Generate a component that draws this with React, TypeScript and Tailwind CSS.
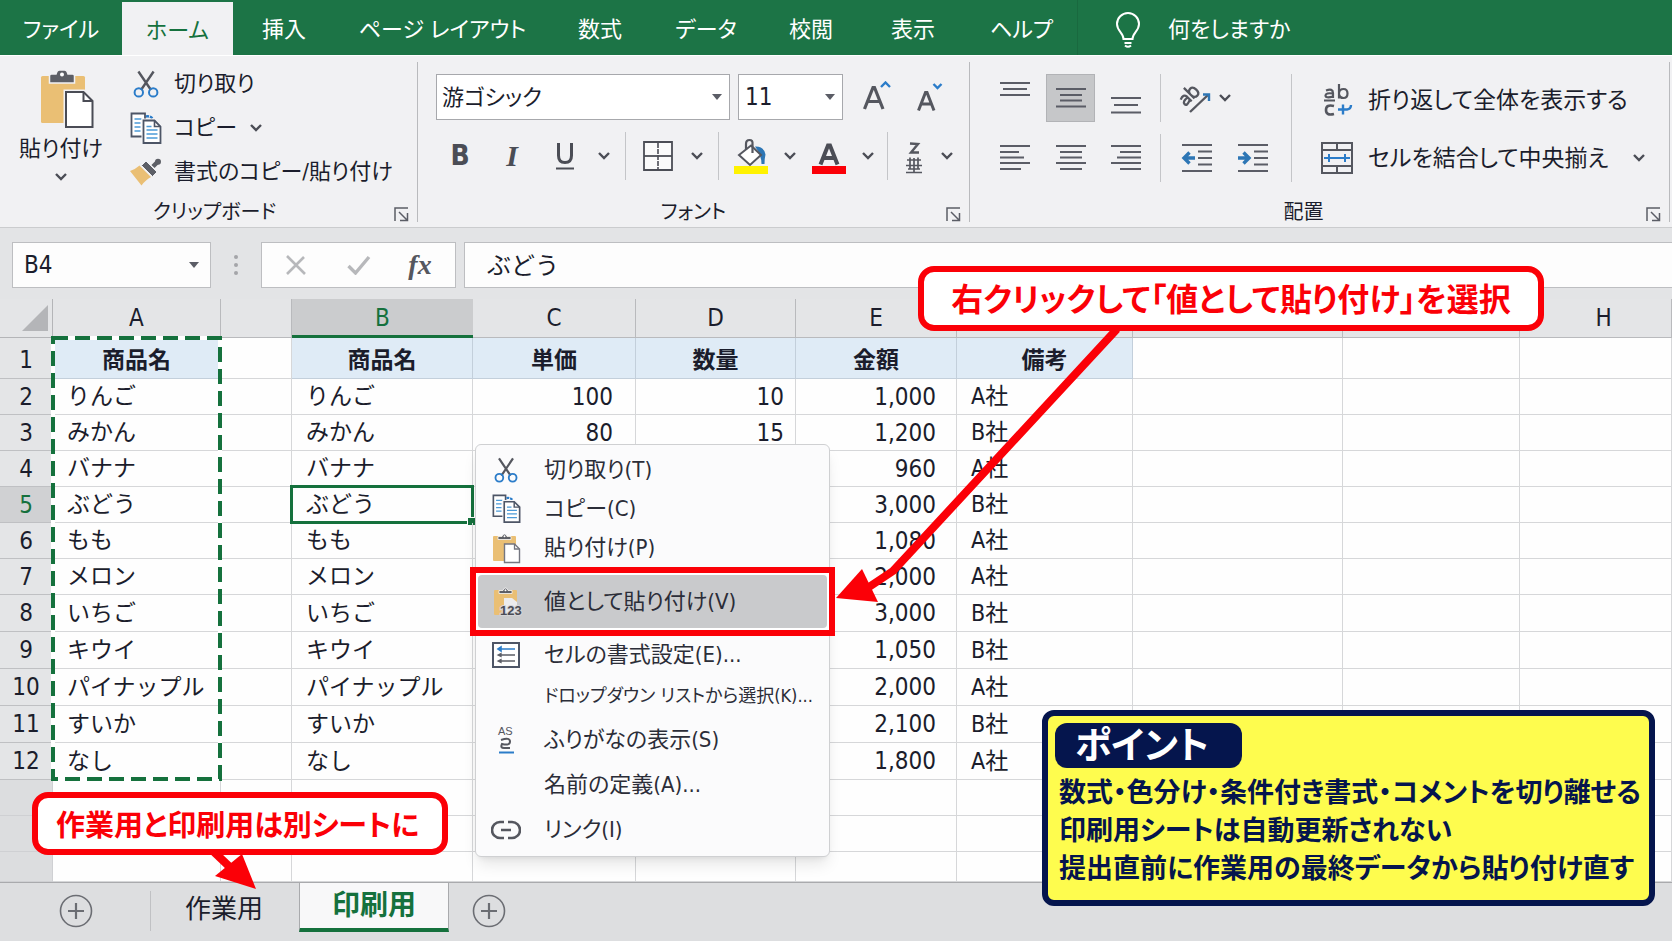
import type { ReactNode } from "react";

const tabs = [
  { label: "ファイル", width: "w-[122px]" },
  { label: "ホーム", width: "w-[111px]" },
  { label: "挿入", width: "w-[102px]" },
  { label: "ページ レイアウト", width: "w-[215px]" },
  { label: "数式", width: "w-[100px]" },
  { label: "データ", width: "w-[112px]" },
  { label: "校閲", width: "w-[98px]" },
  { label: "表示", width: "w-[106px]" },
  { label: "ヘルプ", width: "w-[111px]" },
];

const rows = [
  ["りんご", "100", "10", "1,000", "A社"],
  ["みかん", "80", "15", "1,200", "B社"],
  ["バナナ", "", "", "960", "A社"],
  ["ぶどう", "", "", "3,000", "B社"],
  ["もも", "", "", "1,080", "A社"],
  ["メロン", "", "", "2,000", "A社"],
  ["いちご", "", "", "3,000", "B社"],
  ["キウイ", "", "", "1,050", "B社"],
  ["パイナップル", "", "", "2,000", "A社"],
  ["すいか", "", "", "2,100", "B社"],
  ["なし", "", "", "1,800", "A社"],
];

function Chevron() {
  return (
    <svg width="14" height="10" viewBox="0 0 14 10" fill="none" stroke="#4b4d55" strokeWidth="2.4">
      <path d="M2 2l5 5 5-5" />
    </svg>
  );
}

function ChevronButton({ label, className = "" }: { label: string; className?: string }) {
  return (
    <button aria-label={label} className={`flex h-8 w-[14px] shrink-0 items-center justify-center ${className}`}>
      <Chevron />
    </button>
  );
}

function Scissors({ className }: { className: string }) {
  return (
    <svg className={className} viewBox="0 0 26 28" fill="none">
      <path d="M5.4 1.5L18 20M20.6 1.5L8 20" stroke="#55575f" strokeWidth="2.4" />
      <circle cx="5.8" cy="22.4" r="4.2" stroke="#2b7cc9" strokeWidth="2" />
      <circle cx="20.2" cy="22.4" r="4.2" stroke="#2b7cc9" strokeWidth="2" />
    </svg>
  );
}

function Copy({ className }: { className: string }) {
  return (
    <svg className={className} viewBox="0 0 32 32" fill="none">
      <path d="M1.5 1.5h13.5v23h-13.5z" fill="#fff" stroke="#4d5566" strokeWidth="1.8" />
      <path d="M4.5 7h7M4.5 11h6M4.5 15h6M4.5 19h6" stroke="#4b9ad8" strokeWidth="1.4" />
      <path d="M16 4.5c2.500-.5 4.500 0 6.500 2" stroke="#2b7cc9" strokeWidth="2.4" strokeDasharray="3 1" />
      <path d="M13.500 8.500h11l6 6v16.500h-17z" fill="#fff" stroke="#f5f5f7" strokeWidth="4" />
      <path d="M13.500 8.500h11l6 6v16.500h-17z" fill="#fff" stroke="#4d5566" strokeWidth="1.800" />
      <path d="M24.500 8.500v6h6" stroke="#4d5566" strokeWidth="1.600" />
      <path d="M16.500 14.500h5M16.500 18h11M16.500 22h11M16.500 26h11" stroke="#4b9ad8" strokeWidth="1.400" />
    </svg>
  );
}

function Clipboard({ className }: { className: string }) {
  return (
    <svg className={className} viewBox="0 0 54 60" fill="none">
      <rect x="1" y="7" width="44" height="47" rx="1.500" fill="#eabf74" />
      <path d="M9.500 14V7q0-2 2-2h4.500q1-4 3.500-4h5q2.500 0 3.500 4h4.500q2 0 2 2v7z" fill="#5d5f66" stroke="#f1f1f3" strokeWidth="1.500" />
      <circle cx="22" cy="5.500" r="2" fill="#fff" />
      <path d="M26 23h17.500l9 9v26h-26.500z" fill="#fff" stroke="#f1f1f3" strokeWidth="5" />
      <path d="M26 23h17.500l9 9v26h-26.500z" fill="#fff" stroke="#4a4c55" strokeWidth="2" />
      <path d="M43.500 23v9h9" stroke="#4a4c55" strokeWidth="2" />
    </svg>
  );
}

function SmallClipboard({ values = false }: { values?: boolean }) {
  return (
    <svg className="h-[34px] w-[32px]" viewBox="-1 -2 32 34" fill="none">
      <rect x="2" y="3" width="23" height="25" rx="1" fill="#eabf74" />
      <path d="M7 6.500V3.500h4q.5-2.500 2.500-2.500t2.500 2.500h4v3z" fill="#5d5f66" stroke="#fafafa" strokeWidth=".8" />
      <circle cx="13.500" cy="3.300" r="1" fill="#fff" />
      {values ? (
        <>
          <path d="M12 11h8l5 4v13h-13z" fill="#ececee" />
          <text x="8" y="28" fontSize="13" fontWeight="700" fill="#4a4c55" stroke="#d5d5d7" strokeWidth="2" paintOrder="stroke" fontFamily="Liberation Sans, sans-serif">
            123
          </text>
        </>
      ) : (
        <>
          <path d="M13.500 11h10l5 5v13.500h-15z" fill="#fff" stroke="#747680" strokeWidth="1.400" />
          <path d="M23.500 11v5h5" stroke="#747680" strokeWidth="1.300" />
        </>
      )}
    </svg>
  );
}

function Brush() {
  return (
    <svg className="h-[28px] w-[32px]" viewBox="0 0 32 28" fill="none">
      <path d="M0 13q5-1.500 9.500-5.500L21 19q-5 2.500-9.500 8.500z" fill="#eabf74" />
      <path d="M23 8.500L28 3.500" stroke="#5d5f66" strokeWidth="4.500" />
      <circle cx="28" cy="3.800" r="3" fill="#5d5f66" />
      <path d="M11.500 7.500l4.500-4.500L27 14l-4.500 4.500z" fill="#5d5f66" stroke="#f1f1f3" strokeWidth="1" />
    </svg>
  );
}

function Lines({ d, className = "h-8 w-[30px]" }: { d: string; className?: string }) {
  return (
    <svg className={className} viewBox="0 0 30 32" fill="none" stroke="#5b5d66" strokeWidth="2">
      <path d={d} />
    </svg>
  );
}

function Indent({ right = false }: { right?: boolean }) {
  return (
    <svg className="h-[30px] w-8" viewBox="0 0 32 30" fill="none">
      <path d="M1 2h30M17 8.500h14M17 15h14M17 21.500h14M1 28h30" stroke="#5b5d66" strokeWidth="2" />
      <path d={right ? "M1 15h10M6.500 9.500l5.500 5.500-5.500 5.500" : "M14 15H4M8.500 9.500L3 15l5.500 5.500"} stroke="#2d76b5" strokeWidth="3.400" />
    </svg>
  );
}

function Launcher({ label }: { label: string }) {
  return (
    <button aria-label={label} className="absolute right-[8px] bottom-0">
      <svg width="15" height="15" viewBox="0 0 15 15" fill="none" stroke="#5b5d66" strokeWidth="1.500">
        <path d="M1 14V1h13M5 5l8 8M13.500 6v7.500H6" />
      </svg>
    </button>
  );
}

function Divider({ className = "" }: { className?: string }) {
  return <span className={`h-12 w-px shrink-0 bg-[#c4c5c8] ${className}`} />;
}

function Group({
  label,
  className,
  labelClass = "",
  children,
}: {
  label: string;
  className: string;
  labelClass?: string;
  children: ReactNode;
}) {
  return (
    <section
      aria-label={label}
      className={`relative mt-[6px] flex h-[160px] flex-col border-r border-[#b9babd] ${className}`}
    >
      {children}
      <div className={`mt-auto flex h-5 items-center justify-center text-[20px] leading-none ${labelClass}`}>{label}</div>
      <Launcher label={`${label}の設定`} />
    </section>
  );
}

function Triangle({ className }: { className: string }) {
  return (
    <svg className={`pointer-events-none absolute ${className}`} width="10" height="6" viewBox="0 0 10 6">
      <path d="M0 0h10L5 6z" fill="#5b5d66" />
    </svg>
  );
}

function Ribbon() {
  return (
    <div className="flex h-[173px] shrink-0 border-t border-b border-t-white border-b-[#cbccce] bg-[#f1f1f3]">
      <Group label="クリップボード" className="w-[418px] shrink-0" labelClass="pl-3">
        <div className="flex">
          <button className="flex w-[122px] flex-col items-center pt-[7px] text-[22px] leading-none">
            <Clipboard className="ml-[12px] h-[60px] w-[54px]" />
            <span className="mt-[9px]">貼り付け</span>
            <span className="mt-3">
              <Chevron />
            </span>
          </button>
          <div className="flex flex-col pl-2 text-[22px] leading-none">
            <button className="flex h-[44px] items-center">
              <span className="flex w-[44px] pl-[3px]">
                <Scissors className="h-[28px] w-[26px]" />
              </span>
              切り取り
            </button>
            <div className="flex h-[44px] items-center">
              <button className="flex items-center">
                <span className="flex w-[44px]">
                  <Copy className="h-[32px] w-8" />
                </span>
                コピー
              </button>
              <ChevronButton label="コピーのオプション" className="ml-3" />
            </div>
            <button className="flex h-[44px] items-center">
              <span className="flex w-[44px]">
                <Brush />
              </span>
              書式のコピー/貼り付け
            </button>
          </div>
        </div>
      </Group>

      <Group label="フォント" className="w-[552px] shrink-0">
        <div className="flex pt-3 pl-[18px]">
          <div className="relative">
            <select aria-label="フォント名" className="h-[46px] w-[294px] appearance-none border border-[#a7a8ac] bg-white pl-[5px] text-[22px]">
              <option>游ゴシック</option>
            </select>
            <Triangle className="top-5 right-2" />
          </div>
          <div className="relative ml-2">
            <select aria-label="フォント サイズ" className="h-[46px] w-[105px] appearance-none border border-[#a7a8ac] bg-white pl-[6px] text-[24px]">
              <option>11</option>
            </select>
            <Triangle className="top-5 right-2" />
          </div>
          <button aria-label="フォント サイズの拡大" className="ml-[18px] flex w-8 items-center">
            <svg className="h-8 w-8" viewBox="0 0 32 32" fill="none">
              <path d="M3.500 28L12 6.500h1.500L22 28M6.500 20.500h12.500" stroke="#55575f" strokeWidth="3.200" />
              <path d="M20 6l4.500-4.500L29 6" stroke="#2b7cc9" strokeWidth="2.400" />
            </svg>
          </button>
          <button aria-label="フォント サイズの縮小" className="ml-5 flex w-8 items-center">
            <svg className="h-8 w-8" viewBox="0 0 32 32" fill="none">
              <path d="M5.500 29.500L12.500 11.500h1.500l7 18M8 23h10.500" stroke="#55575f" strokeWidth="3" />
              <path d="M20.500 3l4 4 4-4" stroke="#2b7cc9" strokeWidth="2.400" />
            </svg>
          </button>
        </div>
        <div className="mt-3 flex h-12 items-center pl-[18px] text-[#4b4d55]">
          <button aria-label="太字" className="w-12 text-[28px] leading-none font-bold">B</button>
          <button aria-label="斜体" className="w-14 text-[30px] leading-none font-bold italic [font-family:'Liberation_Serif',serif]">I</button>
          <button aria-label="下線" className="flex w-[50px] justify-center">
            <svg className="h-[30px] w-5" viewBox="0 0 20 30" fill="none" stroke="#4b4d55">
              <path d="M3.500 2v12.500q0 7 6.500 7t6.500-7V2" strokeWidth="3" />
              <path d="M1 27.500h18" strokeWidth="2" />
            </svg>
          </button>
          <ChevronButton label="下線のオプション" className="mx-[7px]" />
          <Divider className="ml-[7px]" />
          <button aria-label="罫線" className="flex w-16 justify-center">
            <svg className="h-[30px] w-[30px]" viewBox="0 0 30 30" fill="none" stroke="#4b4d55">
              <path d="M1 1h28v28H1z" strokeWidth="1.800" fill="#fafafa" />
              <path d="M1 15h28" strokeWidth="1.800" />
              <path d="M15 2v27" strokeWidth="1.600" strokeDasharray="5 1" />
            </svg>
          </button>
          <ChevronButton label="罫線のオプション" />
          <Divider className="ml-[14px]" />
          <button aria-label="塗りつぶしの色" className="flex w-16 justify-center">
            <svg className="h-9 w-[34px]" viewBox="0 0 34 36" fill="none">
              <path d="M21 8.500q9-.5 10.500 8-1 4-1 9.500h-3q0-9-6.500-17.500z" fill="#2d76b5" />
              <path d="M17 7.500L27 17 16 27 5 17z" fill="#fff" stroke="#55575f" strokeWidth="2" />
              <path d="M12 12V6q0-4 3.500-4T18.500 6v9" stroke="#55575f" strokeWidth="2.200" />
              <path d="M0 28h34v8H0z" fill="#fff200" />
            </svg>
          </button>
          <ChevronButton label="塗りつぶしの色を選択" />
          <button aria-label="フォントの色" className="flex w-16 justify-center">
            <svg className="h-9 w-[34px]" viewBox="0 0 34 36" fill="none">
              <path d="M8.500 26.500L16 7.500h2l7.500 19M11.500 20h11" stroke="#4b4d55" strokeWidth="4" />
              <path d="M0 28h34v8H0z" fill="#fb0007" />
            </svg>
          </button>
          <ChevronButton label="フォントの色を選択" />
          <Divider className="ml-3" />
          <button aria-label="ふりがな" className="flex w-[52px] justify-center">
            <svg className="h-9 w-[18px]" viewBox="0 0 18 36" fill="none" stroke="#55575f" strokeWidth="1.700">
              <path d="M5 5.500l8 .5-7 8.500h8" strokeWidth="2.400" />
              <path d="M2 22h14M1 27.500h16M1 34.500h16M5 19.500v12M9 20v14M13 19.500v12M3 31h12" />
            </svg>
          </button>
          <ChevronButton label="ふりがなのオプション" />
        </div>
      </Group>

      <Group label="配置" className="mr-[2px] min-w-0 flex-1" labelClass="pr-8">
        <div className="flex pt-3">
          <div className="flex flex-col gap-3">
            <div className="flex h-12 items-center pl-[20px]">
              <button aria-label="上揃え" className="flex h-12 w-[49px] items-center justify-center">
                <Lines d="M0 9h30M3 15h24M0 21h30" className="mb-4 h-8 w-[30px]" />
              </button>
              <button aria-label="上下中央揃え" className="ml-[7px] flex h-12 w-[49px] items-center justify-center border border-[#b2b3b6] bg-[#c6c7c9]">
                <Lines d="M0 7h30M4 13h22M4 18.500h22M0 24.500h30" />
              </button>
              <button aria-label="下揃え" className="ml-[6px] flex h-12 w-[49px] items-center justify-center">
                <Lines d="M0 8h30M3 15h24M0 22.500h30" className="mt-4 h-8 w-[30px]" />
              </button>
              <Divider className="ml-[10px]" />
              <button aria-label="方向" className="ml-[17px] flex w-10 items-center">
                <svg className="h-8 w-9" viewBox="0 0 36 32" fill="none" stroke="#55575f">
                  <g transform="translate(8 25) rotate(-45)" strokeWidth="2.300">
                    <path d="M1.500-9q6-2.500 6.500 2.500V0M8-5.500Q1-6.500 1-3T8-2.500" />
                    <path d="M12-15V0M12-6q.5-4 4-4t3.500 5-3.500 5-4-4" />
                  </g>
                  <path d="M12 30L30 13" strokeWidth="2.400" />
                  <path d="M25 12.500h6v6.500" stroke="#2d76b5" strokeWidth="2.400" />
                </svg>
              </button>
              <ChevronButton label="方向のオプション" />
            </div>
            <div className="flex h-12 items-center pl-[20px]">
              <button aria-label="左揃え" className="flex w-[49px] justify-center">
                <Lines d="M0 4h30M0 10h19M0 15.500h24M0 21h30M0 27h21" />
              </button>
              <button aria-label="中央揃え" className="ml-[7px] flex w-[49px] justify-center">
                <Lines d="M0 4h30M4 10h22M4 15.500h22M0 21h30M4 27h22" />
              </button>
              <button aria-label="右揃え" className="ml-[6px] flex w-[49px] justify-center">
                <Lines d="M0 4h30M9 10h21M6 15.500h24M0 21h30M9 27h21" />
              </button>
              <Divider className="ml-[10px]" />
              <button aria-label="インデントを減らす" className="ml-5 flex">
                <Indent />
              </button>
              <button aria-label="インデントを増やす" className="ml-6 flex">
                <Indent right />
              </button>
            </div>
          </div>
          <span className="ml-[22px] h-[108px] w-px bg-[#c4c5c8]" />
          <div className="flex flex-col gap-3 pl-[29px] text-[23px] leading-none whitespace-nowrap">
            <button className="flex h-12 items-center pt-1">
              <svg className="mr-[15px] h-8 w-8" viewBox="0 0 32 32" fill="none" stroke="#55575f" strokeWidth="2.200">
                <path d="M5 6.500q7-2.500 7 2.500v5M12 9.500q-7.500-1-7.500 2t7.500 1M3 16.500h11" />
                <path d="M18 0v14.500M18 9q.5-4 4.500-4t4 4.500-4 4.500-4.500-4" />
                <path d="M13 22q-8-2-8 4t8 4" strokeWidth="2.600" />
                <path d="M17 25.500h9q4-.5 4-4.500M22 20.500v10" stroke="#2b7cc9" strokeWidth="2.400" />
              </svg>
              折り返して全体を表示する
            </button>
            <div className="flex h-12 items-center">
              <button className="flex items-center">
                <svg className="mr-[15px] h-8 w-8" viewBox="0 0 32 32" fill="none" stroke="#55575f" strokeWidth="2">
                  <path d="M1 1h30v30H1zM1 8h30M1 24h30M16 1v7M16 24v7" />
                  <path d="M3 16h26M8 12v8M24 12v8" stroke="#2b7cc9" />
                </svg>
                セルを結合して中央揃え
              </button>
              <ChevronButton label="結合のオプション" className="ml-6" />
            </div>
          </div>
        </div>
      </Group>
    </div>
  );
}

function FormulaBar() {
  return (
    <div className="flex h-[71px] shrink-0 items-start bg-[#e3e4e6] pt-[14px] pl-3">
      <div className="relative">
        <input aria-label="名前ボックス" defaultValue="B4" className="h-[46px] w-[199px] border border-[#bdbec1] bg-[#fdfdfd] pl-[11px] text-[24px]" />
        <Triangle className="top-5 right-3" />
      </div>
      <svg className="mx-[21px] mt-3 h-[22px] w-2" viewBox="0 0 8 22" fill="#a4a5a9">
        <circle cx="4" cy="3" r="2" />
        <circle cx="4" cy="11" r="2" />
        <circle cx="4" cy="19" r="2" />
      </svg>
      <div className="flex h-[46px] w-[195px] items-center border border-[#bdbec1] bg-[#fdfdfd]">
        <button aria-label="キャンセル" className="flex w-[67px] justify-center">
          <svg className="h-5 w-5" viewBox="0 0 20 20" stroke="#b7b8bb" strokeWidth="2.600">
            <path d="M1 1l18 18M18 2L1 19" />
          </svg>
        </button>
        <button aria-label="入力" className="flex w-[60px] justify-center">
          <svg className="h-5 w-6" viewBox="0 0 24 20" fill="none" stroke="#b7b8bb" strokeWidth="3.400">
            <path d="M1.500 11l7 7L22 2" />
          </svg>
        </button>
        <button aria-label="関数の挿入" className="w-[62px] text-[28px] leading-none font-bold text-[#55575f] italic [font-family:'Liberation_Serif',serif]">
          fx
        </button>
      </div>
      <input aria-label="数式バー" defaultValue="ぶどう" className="ml-2 h-[46px] min-w-0 flex-1 border border-r-0 border-[#bdbec1] bg-[#fdfdfd] pb-1 pl-[22px] text-[24px] [font-feature-settings:normal]" />
    </div>
  );
}

const line = "border-r border-b border-[#d6d7d9]";
const headFill = "border-r border-b border-[#c3cfdb] bg-[#dfebf6] pt-1 font-bold";

function Sheet() {
  return (
    <div className="relative flex-1 bg-[#fefefe]">
      <table className="w-full table-fixed border-separate border-spacing-0 text-[23px] leading-none [font-feature-settings:normal]">
        <colgroup>
          <col className="w-[53px]" />
          <col className="w-[168px]" />
          <col className="w-[71px]" />
          <col className="w-[181px]" />
          <col className="w-[163px]" />
          <col className="w-[160px]" />
          <col className="w-[161px]" />
          <col className="w-[176px]" />
          <col className="w-[210px]" />
          <col className="w-[177px]" />
          <col />
        </colgroup>
        <thead>
          <tr className="h-[39px] bg-[#e4e5e7] text-[24px]">
            <th aria-label="すべて選択" className="border-r border-b border-[#b4b5b8]">
              <svg className="mr-1 ml-auto h-[26px] w-[26px]" viewBox="0 0 26 26">
                <path d="M26 0v26H0z" fill="#b4b5b8" />
              </svg>
            </th>
            {["A", "", "B", "C", "D", "E", "", "", "", "H"].map((name, i) => (
              <th
                key={i}
                scope="col"
                className={
                  name === "B"
                    ? "border-b-[3px] border-[#15713d] bg-[#cbccce] pt-[2px] font-normal text-[#15713d]"
                    : `border-r border-b border-[#b9babd] font-normal ${name === "H" ? "pl-4" : ""}`
                }
              >
                {name}
              </th>
            ))}
          </tr>
        </thead>
        <tbody>
          <tr className="h-[41px]">
            <th scope="row" className="border-r border-b border-[#bfc0c3] bg-[#e4e5e7] pt-1 text-[24px] font-normal">1</th>
            <td className={`text-center ${headFill}`}>商品名</td>
            <td className={line} />
            {["商品名", "単価", "数量", "金額", "備考"].map((name) => (
              <td key={name} className={`text-center ${headFill}`}>{name}</td>
            ))}
            <td className={line} />
            <td className={line} />
            <td className={line} />
          </tr>
          {rows.map(([name, price, count, total, company], i) => (
            <tr key={name} className={i < 6 ? "h-9" : "h-[37px]"}>
              <th
                scope="row"
                className={`border-r border-b border-[#bfc0c3] text-[24px] font-normal ${i === 3 ? "bg-[#d0d1d3] text-[#15713d]" : "bg-[#e4e5e7]"}`}
              >
                {i + 2}
              </th>
              <td className={`pl-[14px] ${line}`}>{name}</td>
              <td className={line} />
              <td className={`relative pl-[14px] ${line}`}>
                {name}
                {i === 3 && (
                  <span className="absolute -inset-[2px] border-[3px] border-[#15713d]">
                    <span className="absolute -right-[4px] -bottom-[4px] size-[8px] border-t border-l border-white bg-[#15713d]" />
                  </span>
                )}
              </td>
              <td className={`pr-[22px] text-right text-[24px] ${line}`}>{price}</td>
              <td className={`pr-[11px] text-right text-[24px] ${line}`}>{count}</td>
              <td className={`pr-5 text-right text-[24px] ${line}`}>{total}</td>
              <td className={`pl-[14px] ${line}`}>{company}</td>
              <td className={line} />
              <td className={line} />
              <td className={line} />
            </tr>
          ))}
          {["h-9", "h-9", "h-[30px]"].map((height, i) => (
            <tr key={i} className={height}>
              <th className="border-r border-b border-[#cfd0d3] bg-[#dcdddf]" />
              {Array.from({ length: 10 }, (_, c) => (
                <td key={c} className={line} />
              ))}
            </tr>
          ))}
        </tbody>
      </table>
      <svg className="pointer-events-none absolute top-[37px] left-[51px] h-[445px] w-[171px]" viewBox="0 0 171 445" fill="none">
        <rect x="2" y="2" width="167" height="441" stroke="#fff" strokeWidth="4" />
        <rect x="2" y="2" width="167" height="441" stroke="#15713d" strokeWidth="4" strokeDasharray="15 7" />
      </svg>
    </div>
  );
}

function SheetTabs() {
  const plus = (
    <svg className="size-[34px]" viewBox="0 0 34 34" fill="none" stroke="#6b6d73">
      <circle cx="17" cy="17" r="15.500" strokeWidth="1.600" />
      <path d="M17 9v16M9 17h16" strokeWidth="2.200" />
    </svg>
  );
  return (
    <footer className="flex h-[59px] shrink-0 items-start border-t border-[#a9aaad] bg-[#dddee0] text-[26px] leading-none">
      <button aria-label="左に新しいシート" className="mt-[11px] ml-[59px]">{plus}</button>
      <span className="mt-2 ml-[57px] h-10 w-px bg-[#c0c1c4]" />
      <button className="h-[52px] w-[148px] pr-[2px]">作業用</button>
      <button className="h-[49px] w-[150px] border-x border-b-4 border-x-[#a9aaad] border-b-[#15713d] bg-[#f8f8f9] text-[28px] font-bold text-[#15713d]">
        印刷用
      </button>
      <button aria-label="新しいシート" className="mt-[11px] ml-[23px]">{plus}</button>
    </footer>
  );
}

function MenuItem({
  icon,
  label,
  className = "",
  iconClass = "w-[68px]",
}: {
  icon?: ReactNode;
  label: string;
  className?: string;
  iconClass?: string;
}) {
  return (
    <button role="menuitem" className={`flex w-full items-center text-left whitespace-nowrap ${className}`}>
      <span className={`flex shrink-0 justify-center pr-[8px] ${iconClass}`}>{icon}</span>
      {label}
    </button>
  );
}

function ContextMenu() {
  return (
    <div role="menu" className="absolute top-[444px] left-[475px] flex w-[355px] flex-col rounded-md border border-[#cfd0d2] bg-[#fbfbfc] pt-[5px] pb-1 text-[22px] leading-none text-[#2b2d38] shadow-lg">
      <MenuItem className="h-[39px]" icon={<Scissors className="h-[26px] w-6" />} label="切り取り(T)" />
      <MenuItem className="h-[39px]" icon={<Copy className="h-[29px] w-[29px]" />} label="コピー(C)" />
      <MenuItem className="h-[39px]" icon={<SmallClipboard />} label="貼り付け(P)" />
      <div className="-mx-[6px] border-[6px] border-[#fb0007] bg-white p-[2px]">
        <MenuItem
          className="h-[53px] rounded-sm bg-[#c9cacc]"
          iconClass="w-[66px]"
          icon={<SmallClipboard values />}
          label="値として貼り付け(V)"
        />
      </div>
      <MenuItem
        className="h-[38px]"
        icon={
          <svg className="h-[26px] w-7" viewBox="0 0 28 26" fill="none">
            <path d="M1 1h26v24H1z" fill="#fff" stroke="#4d5566" strokeWidth="2" />
            <path d="M6 7h17M6 7l3-2v4z" stroke="#2b7cc9" strokeWidth="1.600" />
            <path d="M6 13h17M6 19h17M6 13l3-1.500v3zM6 19l3-1.500v3z" stroke="#5b5d66" strokeWidth="1.300" />
          </svg>
        }
        label="セルの書式設定(E)..."
      />
      <MenuItem className="h-[44px] text-[18px]" label="ドロップダウン リストから選択(K)..." />
      <MenuItem
        className="h-[44px]"
        icon={
          <svg className="h-[32px] w-[20px]" viewBox="-1 -2 20 32" fill="none">
            <text x="1" y="9" fontSize="11" fill="#55575f" fontFamily="Liberation Sans, sans-serif">AS</text>
            <path d="M4 14q9-3 9 1.500T5 18q-2 4 2 4h6" stroke="#55575f" strokeWidth="2" />
            <path d="M2 26.500h15" stroke="#2b7cc9" strokeWidth="2" />
          </svg>
        }
        label="ふりがなの表示(S)"
      />
      <MenuItem className="h-[45px]" label="名前の定義(A)..." />
      <MenuItem
        className="h-[45px]"
        icon={
          <svg className="h-[20px] w-[30px]" viewBox="0 0 30 20" fill="none" stroke="#55575f" strokeWidth="2.600">
            <path d="M13 2H9a8 8 0 0 0 0 16h4M17 2h4a8 8 0 0 1 0 16h-4M10 10h10" />
          </svg>
        }
        label="リンク(I)"
      />
    </div>
  );
}

const boldFont = "[font-family:'Noto_Sans_CJK_JP',sans-serif] font-bold leading-none whitespace-nowrap";

function Annotations() {
  return (
    <>
      <svg className="pointer-events-none absolute top-[325px] left-[830px] h-[285px] w-[295px]" viewBox="0 0 295 285" fill="none">
        <path d="M287 4L63 246 36 264" stroke="#fb0007" strokeWidth="8" strokeLinejoin="round" />
        <path d="M6 273L32 244 48 277z" fill="#fb0007" />
      </svg>
      <div className={`absolute top-[266px] left-[918px] flex h-[65px] w-[626px] items-center justify-center rounded-2xl border-[6px] border-[#fb0007] bg-white pb-1 text-[32px] text-[#fb0007] ${boldFont}`}>
        右クリックして「値として貼り付け」を選択
      </div>
      <svg className="pointer-events-none absolute top-[848px] left-[205px] h-[44px] w-[56px]" viewBox="0 0 56 44" fill="none">
        <path d="M8 3L30 24" stroke="#fb0007" strokeWidth="8" />
        <path d="M51 41L10 28 37 6z" fill="#fb0007" />
      </svg>
      <div className={`absolute top-[792px] left-[32px] flex h-[63px] w-[416px] items-center rounded-2xl border-[6px] border-[#fb0007] bg-white pl-[18px] text-[29px] text-[#fb0007] ${boldFont}`}>
        作業用と印刷用は別シートに
      </div>
      <aside className={`absolute top-[710px] left-[1042px] h-[196px] w-[613px] rounded-xl border-[6px] border-[#05154d] bg-[#fefc4e] pt-[7px] pl-[7px] text-[27px] text-[#05154d] ${boldFont}`}>
        <h2 className="flex h-[45px] w-[187px] items-center rounded-xl bg-[#05154d] pb-1 pl-[20px] text-[37px] text-white">ポイント</h2>
        <ul className="pt-1 pl-1 leading-[38px]">
          <li>数式・色分け・条件付き書式・コメントを切り離せる</li>
          <li>印刷用シートは自動更新されない</li>
          <li>提出直前に作業用の最終データから貼り付け直す</li>
        </ul>
      </aside>
    </>
  );
}

export default function App() {
  return (
    <main className="relative flex min-h-screen flex-col overflow-hidden bg-[#e3e4e6] text-[#1b1d2c] [font-family:'DejaVu_Sans_Condensed','Noto_Sans_CJK_JP',sans-serif] [font-feature-settings:'palt']">
      <nav className="flex h-[55px] shrink-0 bg-[#1c7446] text-[22px] leading-none text-white">
        {tabs.map((tab) => (
          <button
            key={tab.label}
            className={`shrink-0 pt-1 whitespace-nowrap ${tab.width} ${tab.label === "ホーム" ? "mt-[2px] bg-[#f1f1f3] text-[#15713d]" : ""}`}
          >
            {tab.label}
          </button>
        ))}
        <span className="w-px bg-[#19693f]" />
        <button className="ml-[37px] flex items-center pt-1">
          <svg className="mr-[27px] h-9 w-[26px]" viewBox="0 0 26 36" fill="none" stroke="#fff" strokeWidth="2">
            <path d="M8.500 27c0-6-6.500-8-6.500-15a11 11 0 0 1 22 0c0 7-6.500 9-6.500 15zM9.500 31h7M10 33.500q3 2.500 6 0" />
          </svg>
          何をしますか
        </button>
      </nav>
      <Ribbon />
      <FormulaBar />
      <Sheet />
      <SheetTabs />
      <ContextMenu />
      <Annotations />
    </main>
  );
}
